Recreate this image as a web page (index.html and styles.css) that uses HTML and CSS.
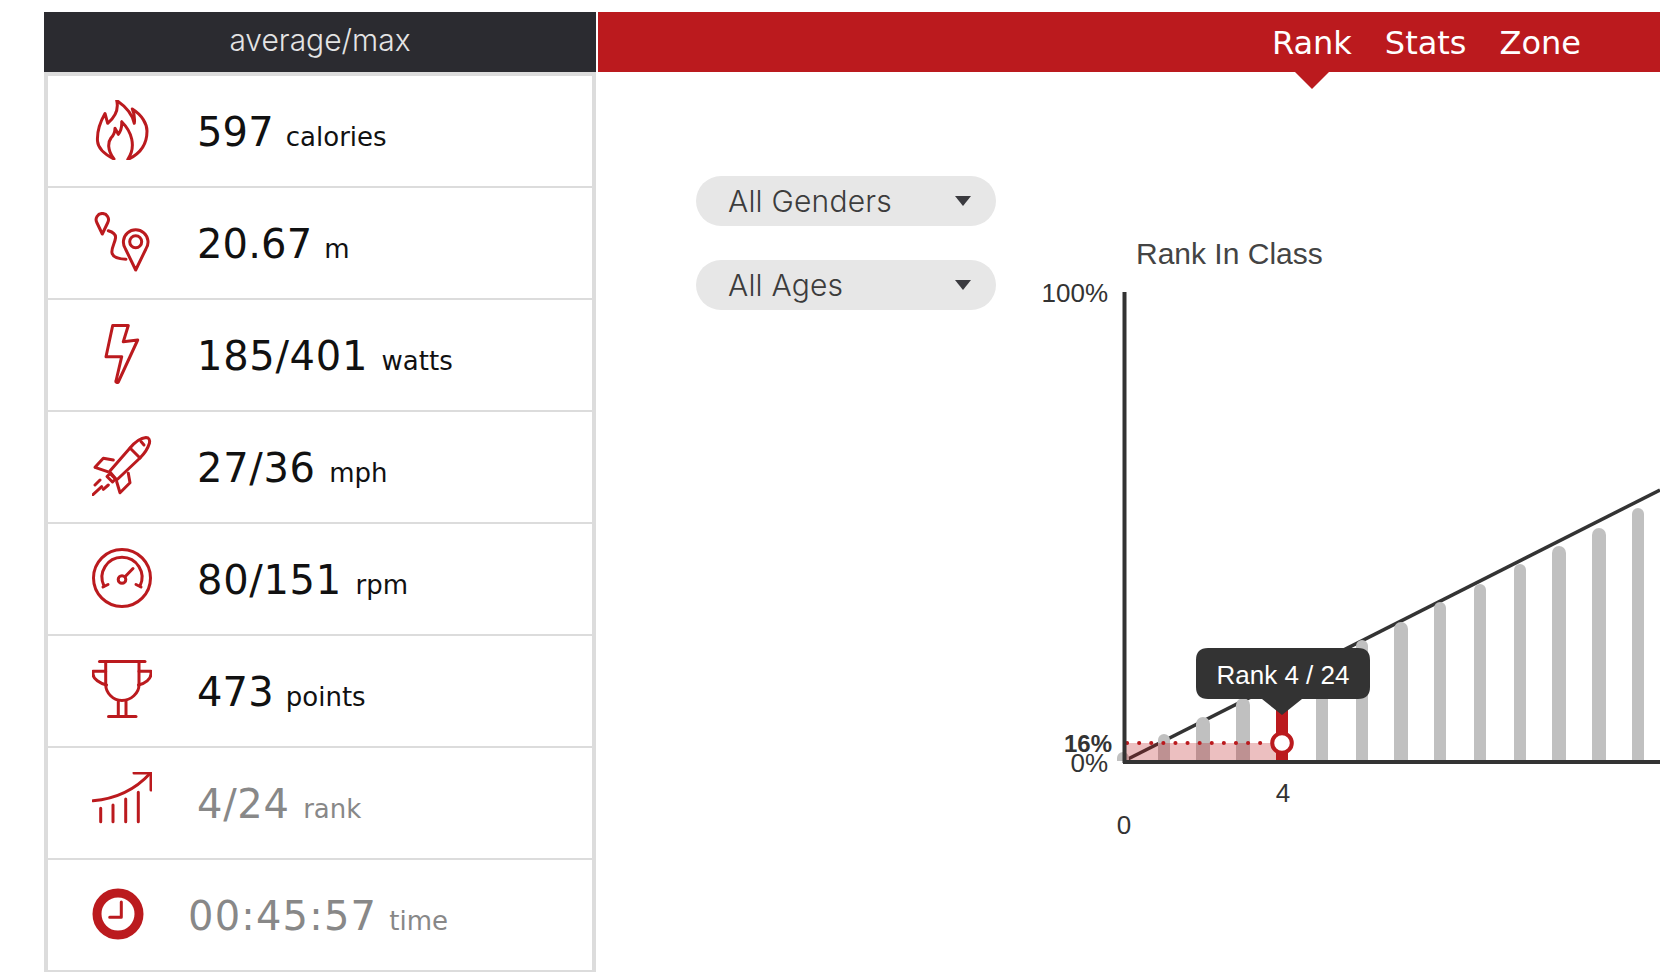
FILE: index.html
```html
<!DOCTYPE html>
<html lang="en">
<head>
<meta charset="utf-8">
<title>Class results</title>
<link rel="stylesheet" href="styles.css">
</head>
<body>
<div class="app">
  <aside class="panel">
    <header class="panel-head">average/max</header>
    <ul class="stats">
      <li class="stat">
        <svg class="icon" viewBox="0 0 60 60"><path d="M22 59C12 54 6 49 5.500 41C5 33 7 24 13 13.500L15.700 23.300C22 18 27 10 24.700 0.500C33 6 40 13 42.300 23.300C43 18 42 13 40.300 9C50 15 55 24 55 31C55 44 48 54 35.700 59.500C41 52 41 45 39.700 39C38 31 34 26 29.700 21.700C30 27 29 31 26.300 34.300L23 28.300C23 32 21 36 19 38C16 42 15 50 22 59Z"/></svg>
        <span class="num">597</span><span class="unit">calories</span>
      </li>
      <li class="stat">
        <svg class="icon" viewBox="0 0 60 60"><path d="M10.300 22L4.800 10.500A6.200 6.200 0 1 1 15.800 10.500Z"/><path d="M16.300 18.700C21 20 24 22 23.500 26C23 31 19 36 20 41C21 46 28 47 34 47.300"/><path d="M43.700 58L33.500 37A12.300 12.300 0 1 1 53.900 37Z"/><circle cx="43.700" cy="29.700" r="6"/></svg>
        <span class="num">20.67</span><span class="unit">m</span>
      </li>
      <li class="stat stat-pair">
        <svg class="icon" viewBox="0 0 60 60"><path d="M20.700 1.500H36.300L31.300 17.700L45.700 16L26.300 58C25.500 59 23.500 58.500 24 57L29.700 32.700H14Z"/></svg>
        <span class="num">185/401</span><span class="unit">watts</span>
      </li>
      <li class="stat stat-pair">
        <svg class="icon" viewBox="0 0 60 60"><path d="M17.500 35.500L38 12C43 6 49 2 54 1.500C57 1.500 58 4 57.500 7C56 12 52 18 48 22L24.700 44Z"/><path d="M38 12L48 22"/><path d="M49 5.500L52 9"/><path d="M21.300 24L11.300 22.300L3 31.300L15.500 35.700"/><path d="M36.300 37.300L38 46.700L28 56.700L24.700 45.700"/><path d="M15 40.500L18 37.500L23.500 43L20.500 46Z"/><path d="M0.500 59L9.700 50.700M3 49L8 44M11.300 53.300L16.300 49"/></svg>
        <span class="num">27/36</span><span class="unit">mph</span>
      </li>
      <li class="stat stat-pair">
        <svg class="icon" viewBox="0 0 60 60"><circle cx="30" cy="30" r="28.500"/><path d="M12 38A20 20 0 1 1 48 38"/><path d="M11 39L16 36.500M49 39L44 36.500"/><circle cx="30" cy="31.500" r="3.800"/><path d="M33 28.800L41 20.500"/></svg>
        <span class="num">80/151</span><span class="unit">rpm</span>
      </li>
      <li class="stat">
        <svg class="icon" viewBox="0 0 60 60"><path d="M7.500 1.500H53"/><path d="M13.700 1.500V25C14 33 21 40.500 30 40.500C39 40.500 47 33 47 25V1.500"/><path d="M13.700 11.300H1V14C1 19 8 23.500 14.500 25"/><path d="M47 11.300H59V14C59 19 53 23.500 46.500 25"/><path d="M26.300 40.500V56.300M34 40.500V56.300"/><path d="M16.500 56.500H44"/></svg>
        <span class="num">473</span><span class="unit">points</span>
      </li>
      <li class="stat stat-pair stat-muted">
        <svg class="icon" viewBox="0 0 60 60"><path d="M1 28.700C22 27 41 20 58 1.500"/><path d="M42 1H59V18"/><path d="M8.700 36.300V49.700M21 33V49.700M33.700 27V49.700M46.300 20.300V49.700"/></svg>
        <span class="num">4/24</span><span class="unit">rank</span>
      </li>
      <li class="stat stat-muted stat-time">
        <svg class="icon icon-clock" viewBox="0 0 52 52"><circle cx="26" cy="26" r="21"/><path d="M29.300 14V29.300H17.700"/></svg>
        <span class="num">00:45:57</span><span class="unit">time</span>
      </li>
    </ul>
  </aside>
  <main class="main">
    <nav class="tabs">
      <a class="tab tab-active">Rank</a>
      <a class="tab">Stats</a>
      <a class="tab">Zone</a>
    </nav>
    <section class="content">
      <div class="filters">
        <div class="pill">All Genders</div>
        <div class="pill">All Ages</div>
      </div>
      <svg class="chart" viewBox="996 72 664 900">
        <defs><clipPath id="plot"><rect x="1100" y="280" width="560" height="481"/></clipPath></defs>
        <text class="chart-title" x="1136" y="264">Rank In Class</text>
        <text class="axis-label end" x="1108" y="302">100%</text>
        <text class="axis-label end bold small" x="1112" y="752">16%</text>
        <text class="axis-label end" x="1108" y="772">0%</text>
        <text class="axis-label mid" x="1283" y="802">4</text>
        <text class="axis-label mid" x="1124" y="834">0</text>
        <line class="trend" x1="1125" y1="760.500" x2="1660" y2="490"/>
        <g class="bars" clip-path="url(#plot)">
          <rect x="1117" y="752" width="12" height="30" rx="6"/>
          <rect x="1158" y="734" width="12" height="50" rx="6"/>
          <rect x="1196" y="717" width="14" height="60" rx="7"/>
          <rect x="1236" y="698" width="14" height="80" rx="7"/>
          <rect x="1316" y="660" width="12" height="120" rx="6"/>
          <rect x="1356" y="640" width="12" height="140" rx="6"/>
          <rect x="1394" y="622" width="14" height="160" rx="7"/>
          <rect x="1434" y="602" width="12" height="180" rx="6"/>
          <rect x="1474" y="584" width="12" height="200" rx="6"/>
          <rect x="1514" y="564" width="12" height="220" rx="6"/>
          <rect x="1552" y="546" width="14" height="240" rx="7"/>
          <rect x="1592" y="528" width="14" height="260" rx="7"/>
          <rect x="1632" y="508" width="12" height="280" rx="6"/>
        </g>
        <rect class="band" x="1124" y="743" width="158" height="18"/>
        <line class="dots" x1="1127" y1="743" x2="1272" y2="743"/>
        <line class="axis" x1="1124.500" y1="292" x2="1124.500" y2="763"/>
        <line class="axis" x1="1123" y1="762" x2="1660" y2="762"/>
        <rect class="marker-bar" x="1276" y="700" width="12" height="60"/>
        <circle class="marker-dot" cx="1282" cy="743" r="9.800"/>
        <path class="tip" d="M1208 648H1358Q1370 648 1370 660V687Q1370 699 1358 699H1302L1282 715L1262 699H1208Q1196 699 1196 687V660Q1196 648 1208 648Z"/>
        <text class="tip-text" x="1283" y="684">Rank 4 / 24</text>
      </svg>
    </section>
  </main>
</div>
</body>
</html>
```
FILE: styles.css
```css
* { box-sizing: border-box; }
html, body { margin: 0; height: 100%; background: #fff; overflow: hidden; }
.app { display: flex; gap: 2px; height: 972px; padding: 12px 0 0 44px; }
.panel { width: 552px; flex: none; display: flex; flex-direction: column; }
.panel-head {
  height: 60px; background: #2b2b30; color: #e4e4e4;
  font: 300 30px/56px Inter, sans-serif; text-align: center;
}
.stats {
  list-style: none; margin: 0; padding: 4px 4px 0; flex: 1;
  background: #dcdcdc; display: flex; flex-direction: column;
}
.stat {
  height: 112px; flex: none; background: #fff; border-bottom: 2px solid #dcdcdc;
  display: flex; align-items: center; padding-left: 44px; padding-bottom: 2px;
  font-family: "DejaVu Sans", sans-serif; color: #111;
}
.stat-muted { color: #888; }
.icon {
  width: 60px; height: 60px; flex: none; margin-right: 45px;
  fill: none; stroke: #bb1a1e; stroke-width: 3; stroke-linecap: round; stroke-linejoin: round;
}
.icon-clock { width: 52px; height: 52px; margin-right: 44px; }
.icon-clock circle { stroke-width: 9; }
.num { font-size: 40px; letter-spacing: 0.150px; line-height: 48px; margin-top: 4px; }
.stat-pair .num { letter-spacing: 0.700px; }
.stat-time .num { letter-spacing: 1.200px; }
.unit { font-size: 26px; line-height: 48px; margin-left: 12px; margin-top: 14px; }
.stat-pair .unit { margin-left: 13.500px; }
.main { flex: 1; display: flex; flex-direction: column; min-width: 0; }
.tabs {
  height: 60px; flex: none; background: #bb1a1e; display: flex; justify-content: flex-end;
  padding-right: 79px; gap: 33px; position: relative;
}
.tab { font: 32px/62px "DejaVu Sans", sans-serif; color: #fff; position: relative; }
.tab-active::after {
  content: ""; position: absolute; left: 50%; top: 60px; margin-top: -1px; margin-left: -18px;
  border: 18px solid transparent; border-top-color: #bb1a1e; border-bottom: 0;
}
.content { flex: 1; display: flex; min-height: 0; }
.filters { width: 300px; margin-left: 98px; padding-top: 104px; display: flex; flex-direction: column; gap: 34px; flex: none; }
.pill {
  height: 50px; border-radius: 25px; background: #e7e7e7; color: #3c3c3c;
  font: 300 30px/50px Inter, sans-serif; letter-spacing: 0.200px; padding-left: 32px; position: relative;
}
.pill::after {
  content: ""; position: absolute; right: 25px; top: 20px;
  border-left: 8.500px solid transparent; border-right: 8.500px solid transparent; border-top: 10px solid #3a3a3f;
}
.chart { flex: 1; height: 900px; display: block; min-width: 0; }
.chart text { font-family: "Liberation Sans", sans-serif; }
.chart-title { font-size: 30px; fill: #444; }
.axis-label { font-size: 26px; fill: #333; }
.small { font-size: 24px; }
.bold { font-weight: 700; }
.end { text-anchor: end; }
.mid { text-anchor: middle; }
.trend { stroke: #333; stroke-width: 3.500; }
.bars rect { fill: #c0c0c0; }
.band { fill: #bb1a1e; fill-opacity: 0.280; }
.dots { stroke: #bb1a1e; stroke-width: 4; stroke-linecap: round; stroke-dasharray: 0.100 12; }
.axis { stroke: #333; stroke-width: 4; }
.marker-bar { fill: #bb1a1e; }
.marker-dot { fill: #fff; stroke: #bb1a1e; stroke-width: 4; }
.tip { fill: #333; }
.tip-text { font-size: 26px; fill: #fff; text-anchor: middle; }
```
